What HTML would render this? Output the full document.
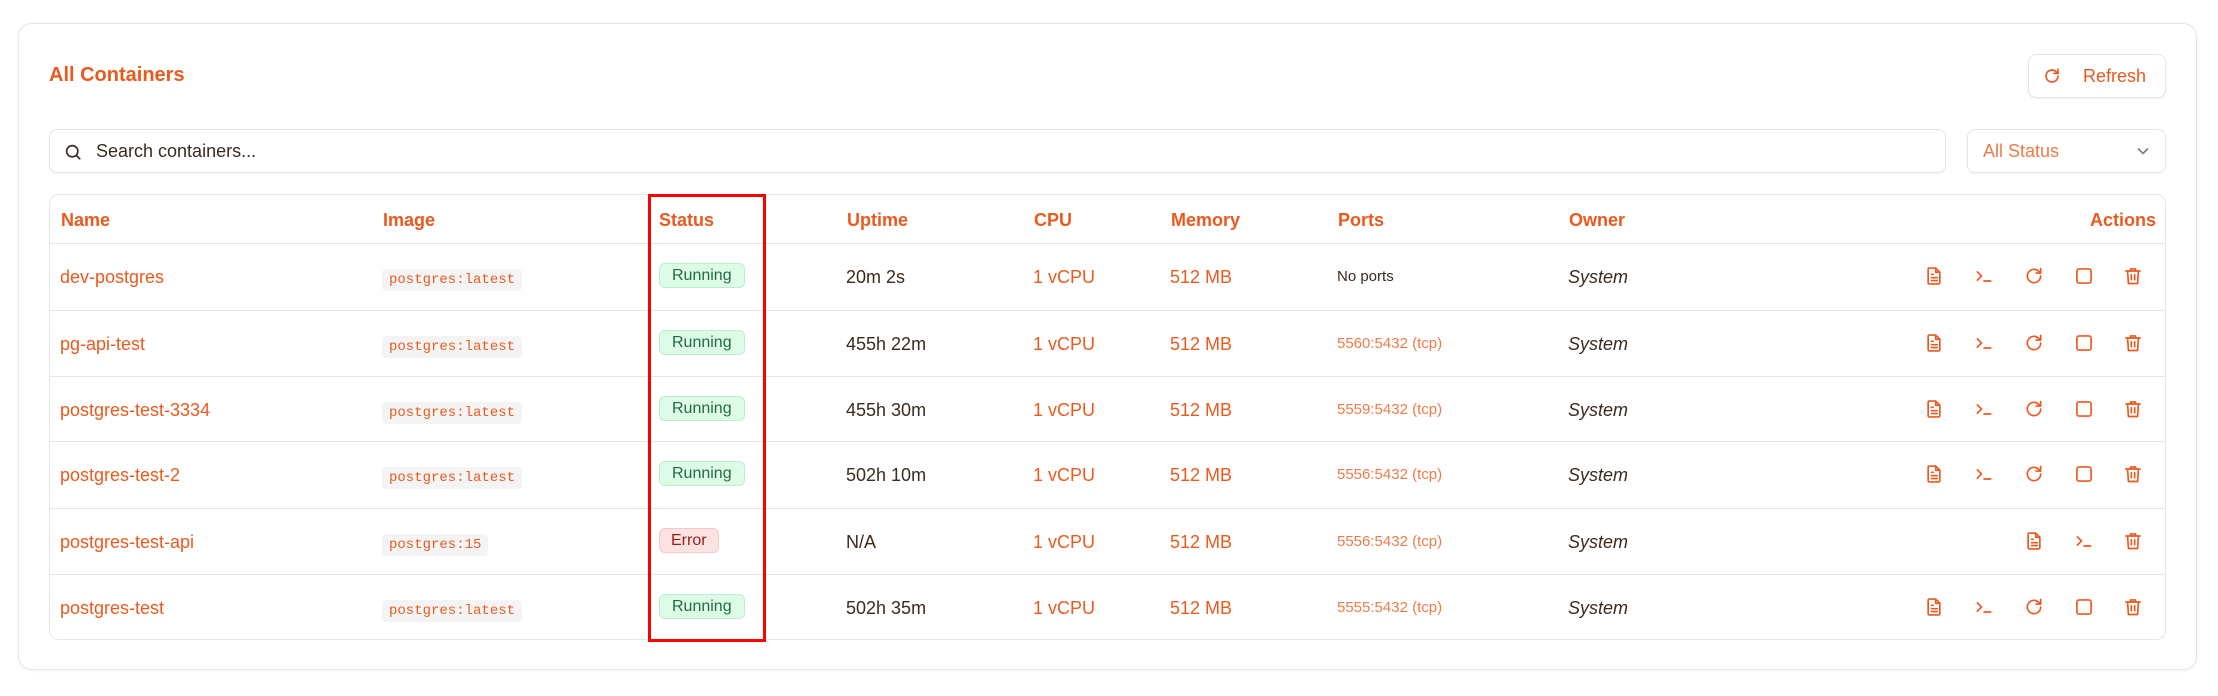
<!DOCTYPE html>
<html><head><meta charset="utf-8"><style>
*{box-sizing:border-box;margin:0;padding:0}
body{width:2218px;height:696px;background:#fff;font-family:"Liberation Sans",sans-serif;color:#3b2a1e;position:relative;overflow:hidden}
.card{position:absolute;left:18px;top:23px;width:2179px;height:647px;border:1.5px solid #e3e6ec;border-radius:14px;box-shadow:0 1px 3px rgba(0,0,0,.06)}
.title{position:absolute;left:49px;top:64px;font-size:20px;font-weight:bold;color:#ea5a1e}
.btn{position:absolute;left:2028px;top:54px;width:138px;height:44px;border:1.5px solid #e3e6ec;border-radius:8px;box-shadow:0 1px 2px rgba(0,0,0,.06);color:#ea5a1e;font-size:18px}
.btn svg{position:absolute;left:14px;top:12px}
.btn span{position:absolute;left:54px;top:11px}
.search{position:absolute;left:49px;top:129px;width:1897px;height:44px;border:1.5px solid #e3e6ec;border-radius:8px;box-shadow:0 1px 2px rgba(0,0,0,.06);font-size:18px;color:#3b2a1e}
.search svg{position:absolute;left:14px;top:13px}
.search span{position:absolute;left:46px;top:11px}
.sel{position:absolute;left:1967px;top:129px;width:199px;height:44px;border:1.5px solid #e3e6ec;border-radius:8px;box-shadow:0 1px 2px rgba(0,0,0,.06);font-size:18px;color:#ee7b4a}
.sel span{position:absolute;left:15px;top:11px}
.sel svg{position:absolute;right:16px;top:17px}
.tbl{position:absolute;left:49px;top:194px;width:2117px;height:446px;border:1.5px solid #e3e6ec;border-radius:10px}
.row{position:absolute;left:0;width:100%;border-top:1.5px solid #e3e6ec}
.c{position:absolute;font-size:18px;white-space:nowrap}
.h{font-weight:bold;color:#ea5a1e;top:15px}
.o{color:#ea5a1e}
.code{font-family:"Liberation Mono",monospace;font-size:14px;color:#ea5a1e;background:#f4f4f5;border-radius:4px;padding:3px 7px}
.ok{font-size:16px;color:#236b45;background:#dcfce7;border:1.5px solid #bbf0cf;border-radius:6px;padding:3px 12px}
.er{font-size:16px;color:#9b1c1c;background:#fde2e2;border:1.5px solid #f8c8c8;border-radius:6px;padding:3px 11px}
.pt{font-size:15px;color:#ee7b4a}
.ic{position:absolute;top:22px}
.red{position:absolute;left:648px;top:194px;width:118px;height:448px;border:3px solid #f00}
</style></head><body>
<div class="card"></div>
<div class="title">All Containers</div>
<div class="btn"><svg width="18" height="18" viewBox="0 0 24 24" fill="none" stroke="#ea5a1e" stroke-width="2.2" stroke-linecap="round" stroke-linejoin="round"><path d="M20 12a8 8 0 1 1-2.6-5.9L20 8.5"/><path d="M20 3v5.5h-5.5"/></svg><span>Refresh</span></div>
<div class="search"><svg width="18" height="18" viewBox="0 0 24 24" fill="none" stroke="#3b2a1e" stroke-width="2.2" stroke-linecap="round"><circle cx="11" cy="11" r="7.5"/><path d="M16.5 16.5L21 21"/></svg><span>Search containers...</span></div>
<div class="sel"><span>All Status</span><svg width="12" height="8" viewBox="0 0 12 8" fill="none" stroke="#8a7a6e" stroke-width="1.6"><path d="M1 1.5l5 5 5-5"/></svg></div>
<div class="tbl">
<div class="c h" style="left:11px">Name</div>
<div class="c h" style="left:333px">Image</div>
<div class="c h" style="left:609px">Status</div>
<div class="c h" style="left:797px">Uptime</div>
<div class="c h" style="left:984px">CPU</div>
<div class="c h" style="left:1121px">Memory</div>
<div class="c h" style="left:1288px">Ports</div>
<div class="c h" style="left:1519px">Owner</div>
<div class="c h" style="right:9px">Actions</div>
</div>
<div id="rows"></div>
<div class="red"></div>
<script>
var d=[["dev-postgres","postgres:latest",1,"20m 2s","No ports"],["pg-api-test","postgres:latest",1,"455h 22m","5560:5432 (tcp)"],["postgres-test-3334","postgres:latest",1,"455h 30m","5559:5432 (tcp)"],["postgres-test-2","postgres:latest",1,"502h 10m","5556:5432 (tcp)"],["postgres-test-api","postgres:15",0,"N/A","5556:5432 (tcp)"],["postgres-test","postgres:latest",1,"502h 35m","5555:5432 (tcp)"]];
var S='width="20" height="20" viewBox="0 0 24 24" fill="none" stroke="#ea5a1e" stroke-width="2" stroke-linecap="round" stroke-linejoin="round"';
var doc='<svg '+S+'><path d="M6 2.5h8l5 5v12.5a1.5 1.5 0 0 1-1.5 1.5h-11A1.5 1.5 0 0 1 5 20V4a1.5 1.5 0 0 1 1-1.5z"/><path d="M14 2.5V7.5h5"/><path d="M9 10h2M9 14h7M9 17.5h7"/></svg>';
var term='<svg '+S+'><path d="M4 7l5 5-5 5"/><path d="M12 18h8"/></svg>';
var rf='<svg '+S+'><path d="M20 12a8 8 0 1 1-2.6-5.9L20 8.5"/><path d="M20 3v5.5h-5.5"/></svg>';
var sq='<svg '+S+'><rect x="3.5" y="3.5" width="17" height="17" rx="2.5"/></svg>';
var tr='<svg '+S+'><path d="M3.5 6h17M9 6V3.5h6V6M5.5 6l1 15h11l1-15M10 10.5v6M14 10.5v6"/></svg>';
var h='';var ys=[243,310,376,441,508,574];
d.forEach(function(r,i){var y=ys[i];
h+='<div class="row" style="top:'+y+'px;left:49px;width:2117px;height:66px">';
h+='<div class="c o" style="left:11px;top:23px">'+r[0]+'</div>';
h+='<div class="c" style="left:333px;top:23px"><span class="code">'+r[1]+'</span></div>';
h+='<div class="c" style="left:610px;top:20px"><span class="'+(r[2]?'ok':'er')+'">'+(r[2]?'Running':'Error')+'</span></div>';
h+='<div class="c" style="left:797px;top:23px">'+r[3]+'</div>';
h+='<div class="c o" style="left:984px;top:23px">1 vCPU</div>';
h+='<div class="c o" style="left:1121px;top:23px">512 MB</div>';
h+='<div class="c pt" style="left:1288px;top:24px'+(i==0?';color:#3b2a1e':'')+'">'+r[4]+'</div>';
h+='<div class="c" style="left:1519px;top:23px;font-style:italic">System</div>';
var xs,ic;if(r[2]){xs=[1875,1925,1975,2025,2074];ic=[doc,term,rf,sq,tr];}else{xs=[1975,2025,2074];ic=[doc,term,tr];}
xs.forEach(function(x,k){h+='<div class="ic" style="left:'+x+'px">'+ic[k]+'</div>';});
h+='</div>';});
document.getElementById('rows').innerHTML=h;
</script>
</body></html>
